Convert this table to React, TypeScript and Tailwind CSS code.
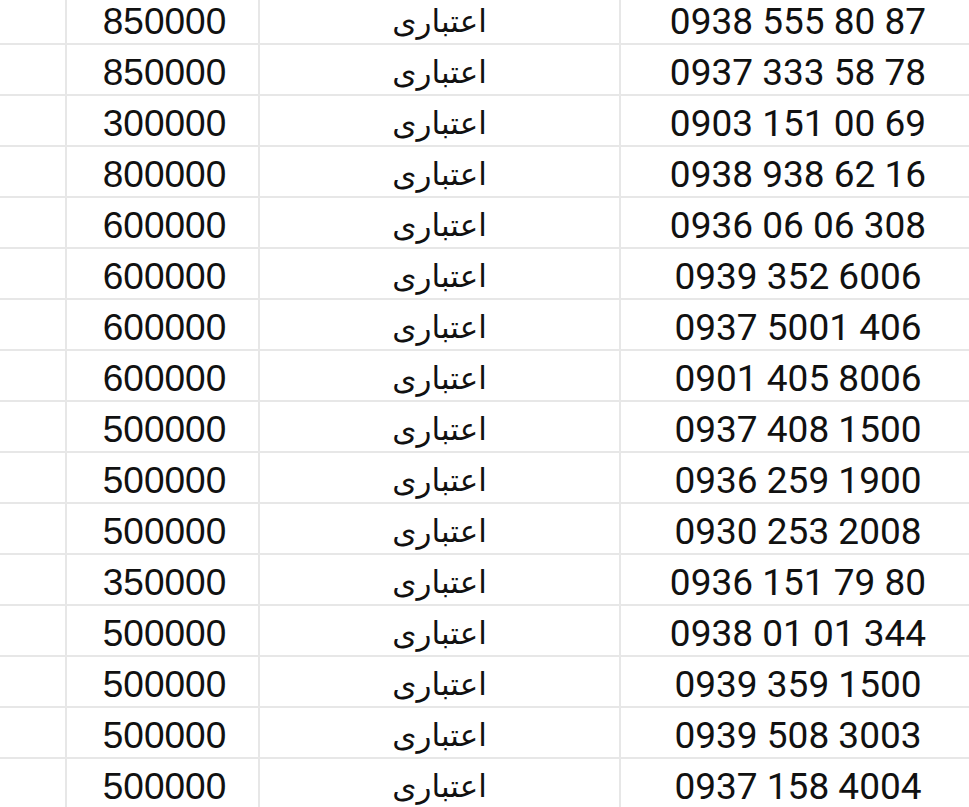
const rows: [string, string][] = [
  ["850000", "0938 555 80 87"],
  ["850000", "0937 333 58 78"],
  ["300000", "0903 151 00 69"],
  ["800000", "0938 938 62 16"],
  ["600000", "0936 06 06 308"],
  ["600000", "0939 352 6006"],
  ["600000", "0937 5001 406"],
  ["600000", "0901 405 8006"],
  ["500000", "0937 408 1500"],
  ["500000", "0936 259 1900"],
  ["500000", "0930 253 2008"],
  ["350000", "0936 151 79 80"],
  ["500000", "0938 01 01 344"],
  ["500000", "0939 359 1500"],
  ["500000", "0939 508 3003"],
  ["500000", "0937 158 4004"],
];

export default function App() {
  return (
    <div className="w-[969px] h-[807px] overflow-hidden bg-white text-[#111]">
      <div className="-mt-[6px] w-[990px]">
        {rows.map(([price, phone], i) => (
          <div
            key={i}
            className="grid grid-cols-[67px_193px_361px_354px] grid-rows-[51px] h-[51px] leading-none"
          >
            <div className="border-r-2 border-b-2 border-[#e7e7e7]" />
            <div className="border-r-2 border-b-2 border-[#e7e7e7] flex items-center justify-center pl-[4px] pt-[5px] text-[37px] font-['Liberation_Sans',Arial,sans-serif]">
              {price}
            </div>
            <div
              dir="rtl"
              className="border-r-2 border-b-2 border-[#e7e7e7] flex items-center justify-center pt-[5px] text-[31px] font-['DejaVu_Sans',sans-serif]"
            >
              اعتباری
            </div>
            <div className="border-b-2 border-[#e7e7e7] flex items-center justify-center pt-[5px] text-[37px] font-['Roboto',sans-serif] whitespace-nowrap">
              {phone}
            </div>
          </div>
        ))}
      </div>
    </div>
  );
}
